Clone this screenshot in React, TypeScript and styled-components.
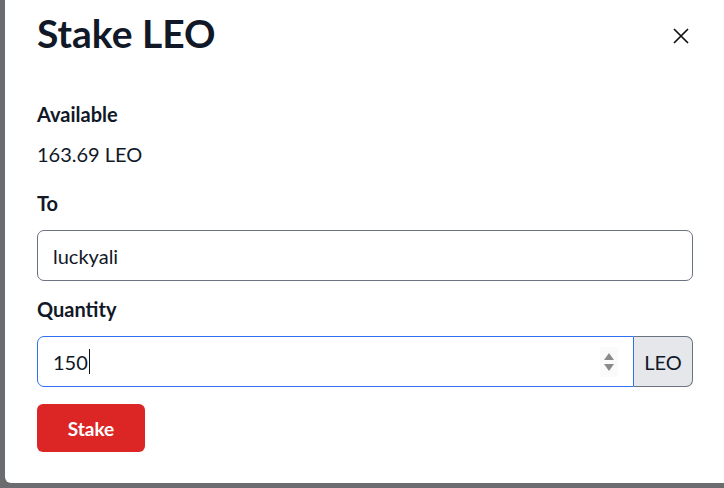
import { createGlobalStyle, styled } from "styled-components";

const GlobalStyle = createGlobalStyle`
    html, body {
        margin: 0;
        padding: 0;
        background: #6b6c70;
    }

    body {
        font-family: "Lato", "Open Sans", sans-serif;
        color: #111827;
    }
`;

// 뒤에 깔린 어두운 배경
const Backdrop = styled.div`
    width: 724px;
    height: 488px;
    overflow: hidden;
    padding-left: 5px;
    box-sizing: border-box;
`;

const Modal = styled.div`
    width: 730px;
    height: 483px;
    background: #ffffff;
    border-radius: 0 0 6px 6px;
    box-sizing: border-box;
    padding: 0 0 0 32px;
`;

const Header = styled.div`
    display: flex;
    align-items: flex-start;
    justify-content: space-between;
    width: 656px;
    padding-top: 10px;
`;

const Title = styled.h1`
    margin: 0;
    font-size: 39px;
    font-weight: 700;
    line-height: 46px;
    color: #111827;
`;

const CloseButton = styled.button`
    border: none;
    background: transparent;
    padding: 0;
    margin: 18px 4px 0 0;
    width: 16px;
    height: 16px;
    cursor: pointer;
    display: flex;
`;

const Body = styled.div`
    width: 656px;
    padding-top: 46px;
`;

const Label = styled.div`
    font-size: 20px;
    font-weight: 700;
    line-height: 24px;
    color: #111827;
`;

const Value = styled.div`
    font-size: 20px;
    line-height: 24px;
    margin: 16px 0 25px;
    color: #111827;
`;

const Field = styled.div<{ $focused?: boolean; $grouped?: boolean }>`
    display: flex;
    align-items: center;
    flex: ${props => props.$grouped ? "1" : "none"};
    height: 51px;
    box-sizing: border-box;
    padding: 0 15px;
    border: 1px solid ${props => props.$focused ? "#2f6ff0" : "#6b7280"};
    border-radius: ${props => props.$grouped ? "7px 0 0 7px" : "7px"};
    font-size: 20px;
    color: #111827;
`;

const FieldText = styled.span`
    flex: 1;
    display: flex;
    align-items: center;
`;

const Caret = styled.span`
    display: inline-block;
    width: 1px;
    height: 25px;
    background: #111;
    margin-left: 1px;
`;

const Spinner = styled.div`
    display: flex;
    flex-direction: column;
    justify-content: center;
    align-items: center;
    gap: 4px;
    width: 18px;
    height: 30px;
    margin-right: 0;
    background: #fafafa;
`;

const Group = styled.div`
    display: flex;
    width: 656px;
`;

const Addon = styled.div`
    display: flex;
    align-items: center;
    justify-content: center;
    width: 59px;
    height: 51px;
    box-sizing: border-box;
    background: #e5e7eb;
    border: 1px solid #6b7280;
    border-left: none;
    border-radius: 0 7px 7px 0;
    font-size: 20px;
    color: #111827;
`;

const Section = styled.div<{ $gap: number }>`
    margin-top: ${props => props.$gap}px;
    display: flex;
    flex-direction: column;
    gap: 15px;
`;

const StakeButton = styled.button`
    margin-top: 17px;
    width: 108px;
    height: 48px;
    border: none;
    border-radius: 6px;
    background: #dc2626;
    color: #ffffff;
    font-family: "Lato", "Open Sans", sans-serif;
    font-size: 19px;
    font-weight: 700;
    cursor: pointer;
`;

const App = () => {
    return (
        <>
            <GlobalStyle />
            <Backdrop>
                <Modal>
                    {/* 제목 + 닫기 */}
                    <Header>
                        <Title>Stake LEO</Title>
                        <CloseButton aria-label="close">
                            <svg width="16" height="16" viewBox="0 0 16 16">
                                <path d="M1 1 L15 15 M15 1 L1 15" stroke="#111" strokeWidth="1.7" />
                            </svg>
                        </CloseButton>
                    </Header>

                    <Body>
                        <Label>Available</Label>
                        <Value>163.69 LEO</Value>

                        <Section $gap={0}>
                            <Label>To</Label>
                            <Field>
                                <FieldText>luckyali</FieldText>
                            </Field>
                        </Section>

                        <Section $gap={16}>
                            <Label>Quantity</Label>
                            <Group>
                                <Field $focused $grouped>
                                    <FieldText>150<Caret /></FieldText>
                                    <Spinner>
                                        <svg width="10" height="7" viewBox="0 0 10 7">
                                            <path d="M5 0 L10 7 L0 7 Z" fill="#8a8a8a" />
                                        </svg>
                                        <svg width="10" height="7" viewBox="0 0 10 7">
                                            <path d="M0 0 L10 0 L5 7 Z" fill="#8a8a8a" />
                                        </svg>
                                    </Spinner>
                                </Field>
                                <Addon>LEO</Addon>
                            </Group>
                        </Section>

                        <StakeButton>Stake</StakeButton>
                    </Body>
                </Modal>
            </Backdrop>
        </>
    );
}

export default App;
